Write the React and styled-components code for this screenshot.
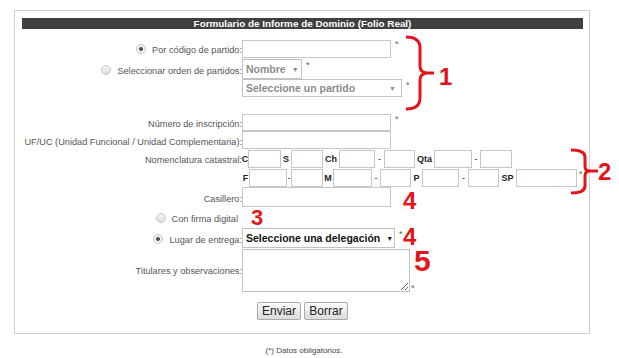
import React from 'react';
import styled, { createGlobalStyle } from 'styled-components';

const Global = createGlobalStyle`
  html, body { margin: 0; padding: 0; background: #fff; }
  body { font-family: "Liberation Sans", Arial, sans-serif; }
  #root { width: 619px; height: 358px; overflow: hidden; }
`;

const Page = styled.div`
  position: relative;
  width: 619px;
  height: 358px;
  padding: 10px 0 0 14px;
  box-sizing: border-box;
`;

const Panel = styled.div`
  width: 576px;
  border: 1px solid #cfcfcf;
  padding: 7px 6px 13px 7px;
  box-sizing: border-box;
`;

const Header = styled.div`
  height: 11px;
  line-height: 11px;
  background: #404040;
  color: #fff;
  font-weight: bold;
  font-size: 9.9px;
  text-align: center;
  margin-bottom: 9px;
  white-space: nowrap;
`;

const Row = styled.div`
  display: grid;
  grid-template-columns: 220px 1fr;
  height: ${p => p.$h}px;
  margin-top: ${p => p.$mt || 0}px;
  align-items: ${p => (p.$top ? 'start' : 'center')};
`;

const Label = styled.div`
  display: flex;
  justify-content: flex-end;
  align-items: center;
  gap: 6px;
  font-size: 9.2px;
  color: #555;
  white-space: nowrap;
  padding-top: 3px;
  padding-right: ${p => p.$pr || 0}px;
  height: ${p => (p.$h ? `${p.$h}px` : 'auto')};
  box-sizing: border-box;
`;

const Field = styled.div`
  display: flex;
  align-items: center;
  height: 100%;
`;

const Radio = styled.span`
  width: 8px;
  height: 8px;
  border-radius: 50%;
  border: 1px solid #c8c8c8;
  background: ${p => (p.$on ? 'radial-gradient(circle, #555 0 1.6px, #eee 2.2px)' : 'linear-gradient(#f4f4f4, #dcdcdc)')};
  flex: none;
  margin-top: -2px;
`;

const TextInput = styled.input`
  width: ${p => p.$w}px;
  height: ${p => p.$h || 18}px;
  border: 1px solid #c6c6c6;
  box-sizing: border-box;
  margin: 0;
  padding: 0;
  background: #fff;
  flex: none;
`;

const Req = styled.span`
  color: #3f7a2e;
  font-size: 9px;
  align-self: flex-start;
  margin: ${p => p.$mt ?? 2}px 0 0 ${p => p.$ml ?? 4}px;
  line-height: 8px;
`;

const Select = styled.div`
  width: ${p => p.$w}px;
  height: ${p => p.$h || 20}px;
  border: 1px solid #c2c2c2;
  box-sizing: border-box;
  display: flex;
  align-items: center;
  justify-content: ${p => (p.$tight ? 'flex-start' : 'space-between')};
  gap: 6px;
  padding: 0 5px 0 3px;
  font-weight: bold;
  font-size: 10.5px;
  white-space: nowrap;
  color: ${p => (p.$dark ? '#111' : '#8c8c8c')};
  background: #fff;
  flex: none;
`;

const Arrow = styled.span`
  font-size: 7px;
  color: ${p => (p.$dark ? '#222' : '#8c8c8c')};
`;

const Nomen = styled.div`
  display: flex;
  flex-direction: column;
`;

const NomenLine = styled.div`
  display: flex;
  align-items: center;
  height: 19px;
`;

const Tag = styled.span`
  width: ${p => p.$w}px;
  flex: none;
  font-size: 9px;
  font-weight: ${p => (p.$dash ? 'normal' : 'bold')};
  color: #222;
  white-space: nowrap;
  display: flex;
  justify-content: center;
`;

const TextArea = styled.textarea`
  width: 168px;
  height: 43px;
  border: 1px solid #c2c2c2;
  box-sizing: border-box;
  margin: 0;
  padding: 0;
  flex: none;
`;

const Buttons = styled.div`
  display: flex;
  justify-content: center;
  gap: 3px;
  margin-top: 12px;
`;

const Button = styled.button`
  width: 44px;
  height: 18px;
  padding: 0;
  font-family: "Liberation Sans", Arial, sans-serif;
  font-size: 12px;
  color: #222;
  border: 1px solid #aaa;
  border-radius: 2px;
  background: linear-gradient(#fafafa, #dcdcdc);
`;

const Footer = styled.div`
  width: 576px;
  text-align: center;
  font-size: 8px;
  color: #444;
  margin-top: 12px;
  padding-left: 4px;
  box-sizing: border-box;
`;

const Overlay = styled.svg`
  position: absolute;
  left: ${p => p.$x}px;
  top: ${p => p.$y}px;
  overflow: visible;
`;

const Digit = styled.span`
  position: absolute;
  left: ${p => p.$x}px;
  top: ${p => p.$y}px;
  font-family: "Liberation Sans", Arial, sans-serif;
  font-weight: bold;
  font-size: ${p => p.$s}px;
  line-height: 1;
  color: #e3141b;
`;

const nomRow1 = [
  ['t', 'C', 6], ['i', 33], ['t', 'S', 10], ['i', 32], ['t', 'Ch', 16], ['i', 36],
  ['d', '-', 9], ['i', 31], ['t', 'Qta', 19], ['i', 38], ['d', '-', 8], ['i', 32],
];
const nomRow2 = [
  ['t', 'F', 7], ['i', 38], ['d', '-', 4], ['i', 32], ['t', 'M', 10], ['i', 39],
  ['d', '-', 8], ['i', 31], ['t', 'P', 11], ['i', 37], ['d', '-', 9], ['i', 31],
  ['t', 'SP', 17], ['i', 61],
];

function NomenItems({ items }) {
  return items.map((it, i) =>
    it[0] === 'i' ? (
      <TextInput key={i} $w={it[1]} />
    ) : (
      <Tag key={i} $w={it[2]} $dash={it[0] === 'd'}>{it[1]}</Tag>
    )
  );
}

const RED = '#e3141b';

export default function App() {
  return (
    <>
      <Global />
      <Page>
        <Panel>
          <Header>Formulario de Informe de Dominio (Folio Real)</Header>

          <Row $h={21}>
            <Label><Radio $on />Por código de partido:</Label>
            <Field><TextInput $w={149} /><Req>*</Req></Field>
          </Row>
          <Row $h={20}>
            <Label><Radio />Seleccionar orden de partidos:</Label>
            <Field>
              <Select $w={60}>Nombre<Arrow>▼</Arrow></Select>
              <Req>*</Req>
            </Field>
          </Row>
          <Row $h={18}>
            <Label />
            <Field>
              <Select $w={160} $h={18}>Seleccione un partido<Arrow>▼</Arrow></Select>
              <Req>*</Req>
            </Field>
          </Row>

          <Row $h={17} $mt={17}>
            <Label>Número de inscripción:</Label>
            <Field><TextInput $w={149} $h={17} /><Req $mt={1}>*</Req></Field>
          </Row>
          <Row $h={18}>
            <Label>UF/UC (Unidad Funcional / Unidad Complementaria):</Label>
            <Field><TextInput $w={149} /></Field>
          </Row>
          <Row $h={38} $top>
            <Label $h={19}>Nomenclatura catastral:</Label>
            <Nomen>
              <NomenLine><NomenItems items={nomRow1} /></NomenLine>
              <NomenLine><NomenItems items={nomRow2} /><Req $ml={2}>*</Req></NomenLine>
            </Nomen>
          </Row>
          <Row $h={20}>
            <Label>Casillero:</Label>
            <Field><TextInput $w={149} $h={20} /></Field>
          </Row>
          <Row $h={21}>
            <Label $pr={4}><Radio />Con firma digital</Label>
            <Field />
          </Row>
          <Row $h={20}>
            <Label><Radio $on />Lugar de entrega:</Label>
            <Field>
              <Select $w={153} $dark $tight>Seleccione una delegación<Arrow $dark>▼</Arrow></Select>
              <Req>*</Req>
            </Field>
          </Row>
          <Row $h={42} $top>
            <Label $h={42}>Titulares y observaciones:</Label>
            <Field>
              <TextArea />
              <Req $mt={36} $ml={1}>*</Req>
            </Field>
          </Row>

          <Buttons>
            <Button type="button">Enviar</Button>
            <Button type="button">Borrar</Button>
          </Buttons>
        </Panel>
        <Footer>(*) Datos obligatorios.</Footer>

        <Overlay $x={400} $y={30} width="40" height="90" viewBox="0 0 40 90">
          <path d="M6 7 Q20 7 20 18 L20 36 Q20 43 28 43 Q20 43 20 50 L20 68 Q20 79 6 79 M28 43 L34 43"
            fill="none" stroke={RED} strokeWidth="3" strokeLinejoin="round" />
        </Overlay>
        <Digit $x={439} $y={65} $s={24}>1</Digit>

        <Overlay $x={565} $y={145} width="40" height="55" viewBox="0 0 40 55">
          <path d="M6 5 Q20 5 20 12 L20 21 Q20 26 25 26 Q20 26 20 31 L20 41 Q20 48 6 48 M25 26 L33 26"
            fill="none" stroke={RED} strokeWidth="3" strokeLinejoin="round" />
        </Overlay>
        <Digit $x={598} $y={160} $s={24}>2</Digit>

        <Digit $x={251} $y={207} $s={22}>3</Digit>
        <Digit $x={403} $y={189} $s={24}>4</Digit>
        <Digit $x={403} $y={225} $s={24}>4</Digit>
        <Digit $x={414} $y={246} $s={30}>5</Digit>
      </Page>
    </>
  );
}
